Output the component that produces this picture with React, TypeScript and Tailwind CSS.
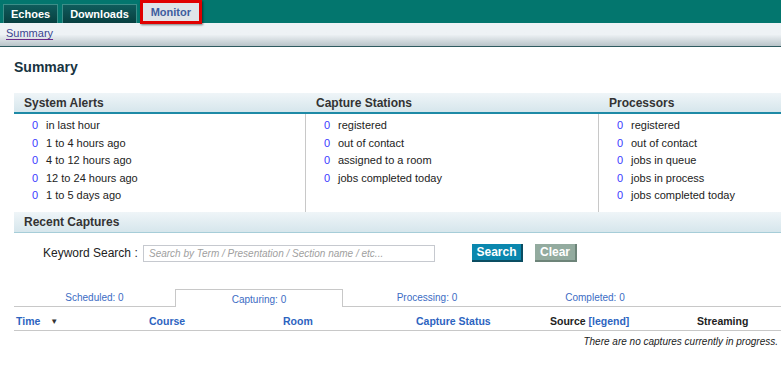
import React from "react";

const Row = ({ label }: { label: string }) => (
  <div className="flex h-[17.4px] items-center">
    <span className="w-[14px] text-[#3a3aff]">0</span>
    <span className="text-[#222]">{label}</span>
  </div>
);

const Col = ({ items, pl, w, border }: { items: string[]; pl: string; w: string; border?: boolean }) => (
  <div className={`${w} ${border ? "border-r border-[#c8c8c8]" : ""} flex flex-col`}>
    <div className="h-[21px]" />
    <div className={`${pl} pt-[3px]`}>
      {items.map((i) => (
        <Row key={i} label={i} />
      ))}
    </div>
  </div>
);

export default function App() {
  return (
    <div className="w-[781px] h-[372px] bg-white overflow-hidden text-[11px]" style={{ fontFamily: '"Liberation Sans", Arial, sans-serif' }}>
      {/* top nav */}
      <div className="h-[23px] bg-[#03766e] flex items-end pl-[3px] gap-[4px]">
        <div className="h-[19px] px-[7px] flex items-center bg-gradient-to-b from-[#0f5c5c] to-[#083f40] border-t border-x border-[#3c8e88] text-white font-bold text-[11px]">Echoes</div>
        <div className="h-[19px] px-[7px] flex items-center bg-gradient-to-b from-[#0f5c5c] to-[#083f40] border-t border-x border-[#3c8e88] text-white font-bold text-[11px]">Downloads</div>
        <div className="h-[24px] w-[62px] -ml-[1px] -mb-px border-[3px] border-[#e00000] bg-[#dfe4e8] flex items-center justify-center text-[#3d5d9e] font-bold text-[11px] shadow-[1px_1px_2px_rgba(0,0,0,0.5)]">Monitor</div>
      </div>
      {/* sub bar */}
      <div className="h-[24px] bg-gradient-to-b from-[#eef2f5] via-[#eef2f5] to-[#b9c4c9] border-b border-[#2f5a60] flex items-center pl-[6px]">
        <span className="text-[#3a4690] text-[11px] underline decoration-[#6a2a8a] underline-offset-2 -mt-[2px]">Summary</span>
      </div>
      {/* heading */}
      <div className="pl-[14px] pt-[10px] h-[46px] text-[14px] font-bold text-[#17333f]">Summary</div>

      {/* summary panel */}
      <div className="ml-[14px] relative">
        <div className="absolute left-0 right-0 top-0 h-[21px] bg-gradient-to-b from-[#eff5f8] to-[#d6e6ec] border-b-2 border-[#1e8aa6] flex text-[12px] font-bold text-[#333]">
          <div className="w-[292px] pl-[10px] flex items-center">System Alerts</div>
          <div className="w-[293px] pl-[10px] flex items-center">Capture Stations</div>
          <div className="pl-[10px] flex items-center">Processors</div>
        </div>
        <div className="flex h-[119px]">
          <Col w="w-[292px]" pl="pl-[18px]" border items={["in last hour", "1 to 4 hours ago", "4 to 12 hours ago", "12 to 24 hours ago", "1 to 5 days ago"]} />
          <Col w="w-[293px]" pl="pl-[18px]" border items={["registered", "out of contact", "assigned to a room", "jobs completed today"]} />
          <Col w="flex-1" pl="pl-[18px]" items={["registered", "out of contact", "jobs in queue", "jobs in process", "jobs completed today"]} />
        </div>
        {/* Recent captures header */}
        <div className="h-[21px] bg-gradient-to-b from-[#eff5f8] to-[#d6e6ec] border-b border-[#a6cdd8] flex items-center pl-[10px] text-[12px] font-bold text-[#333]">Recent Captures</div>
      </div>

      {/* search */}
      <div className="flex items-center h-[18px] mt-[11px] pl-[43px]">
        <span className="text-[12px] text-[#222] w-[100px]">Keyword Search :</span>
        <div className="w-[292px] h-[17px] border border-[#c6c9cf] flex items-center pl-[5px] text-[10px] italic text-[#a0a0a0]">Search by Term / Presentation / Section name / etc...</div>
        <div className="ml-[37px] w-[51px] h-[18px] bg-[#0a87ae] border-r-2 border-b-2 border-[#0a4d62] text-white text-[12px] font-bold flex items-center justify-center">Search</div>
        <div className="ml-[12px] w-[42px] h-[18px] bg-[#93ab9f] border-r-2 border-b-2 border-[#6d8479] text-white text-[12px] font-bold flex items-center justify-center">Clear</div>
      </div>

      {/* tabs */}
      <div className="ml-[14px] mt-[27px] flex h-[18px] border-b border-[#c8c8c8] text-[10px] text-[#3c6cc4]">
        <div className="w-[161px] flex items-center justify-center">Scheduled: 0</div>
        <div className="w-[168px] h-[18px] border-t border-x border-[#c8c8c8] bg-white -mb-px flex items-center justify-center pt-[1px]">Capturing: 0</div>
        <div className="w-[168px] flex items-center justify-center">Processing: 0</div>
        <div className="w-[168px] flex items-center justify-center">Completed: 0</div>
      </div>

      {/* table header */}
      <div className="ml-[14px] flex h-[24px] items-center border-b border-[#c8c8c8] text-[10.5px] font-bold text-[#2d64bf] pt-[6px]">
        <div className="w-[135px] pl-[2px] flex items-center">Time<span className="ml-[10px] text-[#333] text-[8px]">▼</span></div>
        <div className="w-[134px]">Course</div>
        <div className="w-[133px]">Room</div>
        <div className="w-[134px]">Capture Status</div>
        <div className="w-[147px] text-[#222]">Source <span className="text-[#2d64bf]">[legend]</span></div>
        <div className="text-[#222]">Streaming</div>
      </div>
      <div className="text-right pr-[3px] pt-[3px] italic text-[10px] text-[#222]">There are no captures currently in progress.</div>
    </div>
  );
}
